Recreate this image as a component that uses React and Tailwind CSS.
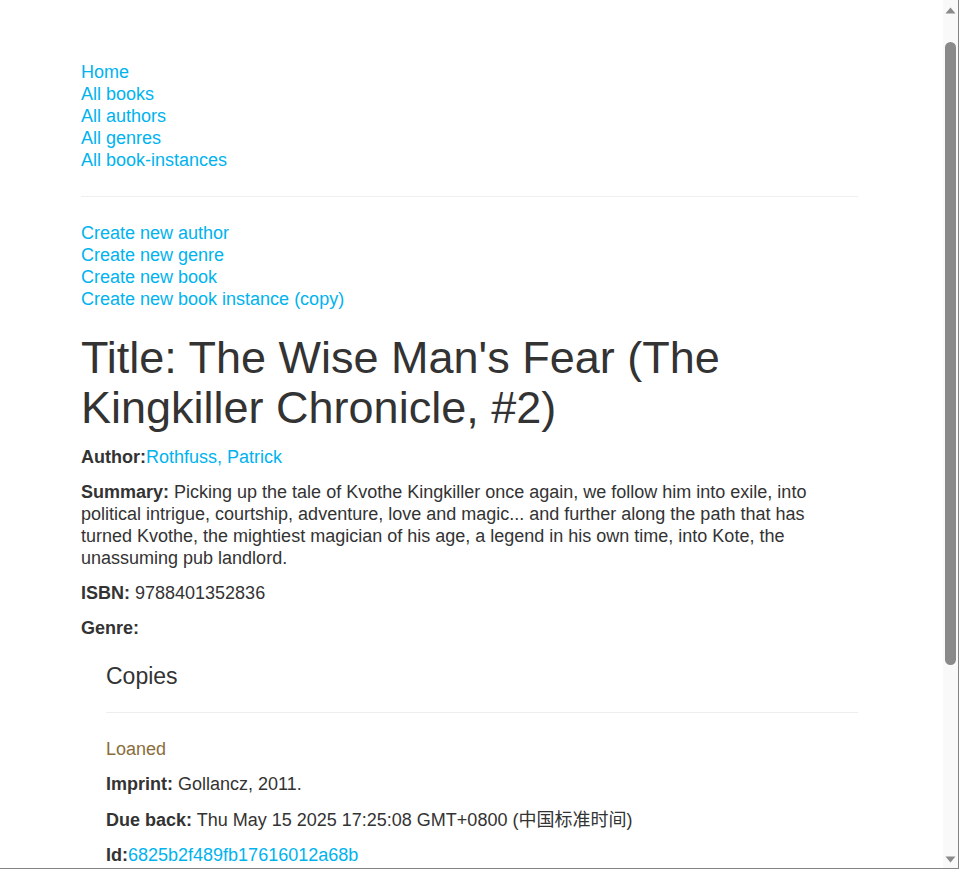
export default function App() {
  const link = "text-[#00b3ef] no-underline";
  const font = { fontFamily: '"Liberation Sans", Arial, "Noto Sans CJK SC", sans-serif' };
  return (
    <div className="flex h-[869px] w-[959px] overflow-hidden border-r border-b border-[#848484] bg-white text-[#333]" style={font}>
      <div className="min-w-0 flex-1 overflow-hidden pl-[81px] pr-[85px] text-[18px] leading-[22px]">
        <ul className="mt-[61px] list-none p-0">
          <li><a className={link}>Home</a></li>
          <li><a className={link}>All books</a></li>
          <li><a className={link}>All authors</a></li>
          <li><a className={link}>All genres</a></li>
          <li><a className={link}>All book-instances</a></li>
        </ul>
        <hr className="mt-[25px] border-t border-[#eee]" />
        <ul className="mt-[25px] list-none p-0">
          <li><a className={link}>Create new author</a></li>
          <li><a className={link}>Create new genre</a></li>
          <li><a className={link}>Create new book</a></li>
          <li><a className={link}>Create new book instance (copy)</a></li>
        </ul>
        <h1 className="mt-[23px] text-[45px] font-normal leading-[50px]">
          Title: The Wise Man's Fear (The Kingkiller Chronicle, #2)
        </h1>
        <p className="mt-[13px]">
          <strong>Author:</strong>
          <a className={link}>Rothfuss, Patrick</a>
        </p>
        <p className="mt-[13px]">
          <strong>Summary:</strong> Picking up the tale of Kvothe Kingkiller once again, we follow him into exile, into political intrigue, courtship, adventure, love and magic... and further along the path that has turned Kvothe, the mightiest magician of his age, a legend in his own time, into Kote, the unassuming pub landlord.
        </p>
        <p className="mt-[13px]">
          <strong>ISBN:</strong> 9788401352836
        </p>
        <p className="mt-[13px]">
          <strong>Genre:</strong>
        </p>
        <div className="ml-[25px] mt-[25px]">
          <h4 className="text-[23px] font-normal leading-[25px]">Copies</h4>
          <hr className="mt-[23px] border-t border-[#eee]" />
          <p className="mt-[25px] text-[#8a6d3b]">Loaned</p>
          <p className="mt-[13px]">
            <strong>Imprint:</strong> Gollancz, 2011.
          </p>
          <p className="mt-[14px]">
            <strong>Due back:</strong> Thu May 15 2025 17:25:08 GMT+0800 (中国标准时间)
          </p>
          <p className="mt-[13px]">
            <strong>Id:</strong>
            <a className={link}>6825b2f489fb17616012a68b</a>
          </p>
        </div>
      </div>
      <div className="flex w-[15px] shrink-0 flex-col items-center bg-[#f9f9f9]">
        <svg width="11" height="7" viewBox="0 0 11 7" className="mt-[7px]">
          <path d="M5.5 0.5 L10.5 6.5 L0.5 6.5 Z" fill="#8a8a8a" />
        </svg>
        <div className="mt-[28px] h-[623px] w-[11px] rounded-t-[6px] rounded-b-[6px] bg-[#8a8a8a]" />
        <div className="flex-1" />
        <svg width="11" height="7" viewBox="0 0 11 7" className="mb-[5px]">
          <path d="M0.5 0.5 L10.5 0.5 L5.5 6.5 Z" fill="#8a8a8a" />
        </svg>
      </div>
    </div>
  );
}
